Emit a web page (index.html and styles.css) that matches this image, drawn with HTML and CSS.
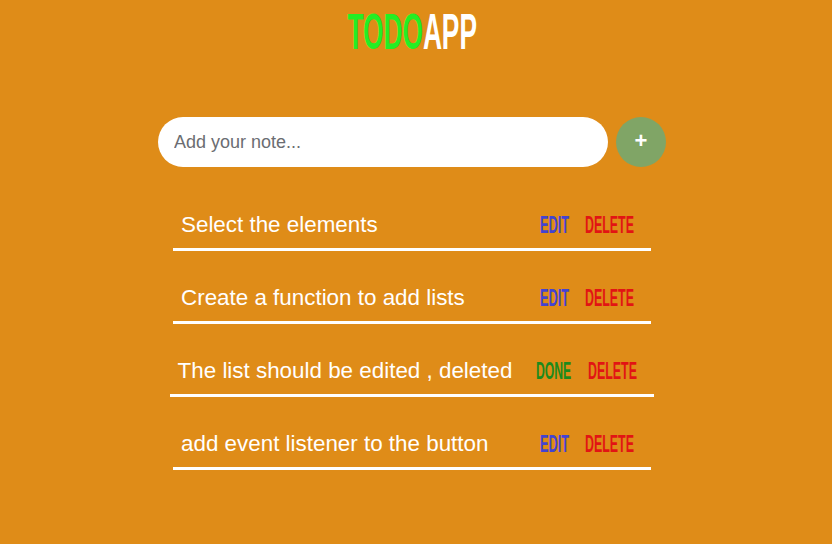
FILE: index.html
```html
<!DOCTYPE html>
<html lang="en">
<head>
<meta charset="utf-8">
<title>TodoApp</title>
<link rel="stylesheet" href="styles.css">
</head>
<body>
  <main class="app">
    <h1 class="title"><span class="title-inner"><span class="todo">TODO</span><span class="app-word">APP</span></span></h1>
    <form class="add-form">
      <input class="note-input" type="text" placeholder="Add your note...">
      <button class="add-btn" type="button">+</button>
    </form>
    <ul class="list">
      <li class="item">
        <span class="item-text">Select the elements</span>
        <div class="actions">
          <button class="btn edit" type="button"><span>EDIT</span></button>
          <button class="btn delete" type="button"><span>DELETE</span></button>
        </div>
      </li>
      <li class="item">
        <span class="item-text">Create a function to add lists</span>
        <div class="actions">
          <button class="btn edit" type="button"><span>EDIT</span></button>
          <button class="btn delete" type="button"><span>DELETE</span></button>
        </div>
      </li>
      <li class="item">
        <span class="item-text">The list should be edited , deleted</span>
        <div class="actions">
          <button class="btn done" type="button"><span>DONE</span></button>
          <button class="btn delete" type="button"><span>DELETE</span></button>
        </div>
      </li>
      <li class="item">
        <span class="item-text">add event listener to the button</span>
        <div class="actions">
          <button class="btn edit" type="button"><span>EDIT</span></button>
          <button class="btn delete" type="button"><span>DELETE</span></button>
        </div>
      </li>
    </ul>
  </main>
</body>
</html>
```
FILE: styles.css
```css
html, body {
  height: 100%;
}
body {
  margin: 0 8px 0 0;
  background: #df8c18;
  font-family: "Liberation Sans", Arial, sans-serif;
  color: #fff;
}
.app {
  display: flex;
  flex-direction: column;
  align-items: center;
  padding-top: 7px;
}
.title {
  margin: 0;
  font-size: 50px;
  line-height: 50px;
  font-weight: 700;
  text-align: center;
}
.title-inner {
  display: inline-block;
  white-space: nowrap;
  transform: scaleX(0.526);
  transform-origin: center;
}
.todo { color: #24ee24; }
.app-word { color: #fff; }

.add-form {
  display: flex;
  align-items: center;
  gap: 8px;
  margin-top: 60px;
}
.note-input {
  box-sizing: border-box;
  width: 450px;
  height: 50px;
  border: none;
  border-radius: 25px;
  background: #fff;
  padding: 0 16px;
  font-family: "Liberation Sans", Arial, sans-serif;
  font-size: 18px;
  color: #333;
  outline: none;
}
.note-input::placeholder {
  color: #6b6d72;
}
.add-btn {
  width: 50px;
  height: 50px;
  border: none;
  border-radius: 50%;
  background: #80a566;
  color: #fff;
  font-family: "Liberation Sans", Arial, sans-serif;
  font-size: 22px;
  font-weight: 700;
  padding: 0 0 2px;
  display: flex;
  align-items: center;
  justify-content: center;
}

.list {
  list-style: none;
  margin: 33px 0 0;
  padding: 0;
  display: flex;
  flex-direction: column;
  align-items: center;
  gap: 22px;
}
.item {
  box-sizing: border-box;
  min-width: 478px;
  display: flex;
  align-items: center;
  justify-content: space-between;
  padding: 12px 17px 10px 8px;
  border-bottom: 3px solid #fff;
}
.item-text {
  font-size: 22.4px;
  line-height: 26px;
  white-space: nowrap;
}
.actions {
  display: flex;
  align-items: center;
  gap: 16px;
  margin-left: 24px;
}
.btn {
  display: flex;
  justify-content: flex-start;
  align-items: center;
  overflow: visible;
  background: none;
  border: none;
  padding: 0;
  height: 26px;
  font-family: "Liberation Sans", Arial, sans-serif;
  font-size: 23px;
  font-weight: 700;
  cursor: pointer;
}
.btn span {
  display: inline-block;
  white-space: nowrap;
  transform-origin: left center;
}
.edit { width: 29px; color: #4343d2; }
.edit span { transform: scaleX(0.555); }
.delete { width: 49px; color: #e21414; }
.delete span { transform: scaleX(0.54); }
.done { width: 35px; color: #1c8a1c; }
.done span { transform: scaleX(0.53); }
.done + .delete { margin-left: 1px; }
```
